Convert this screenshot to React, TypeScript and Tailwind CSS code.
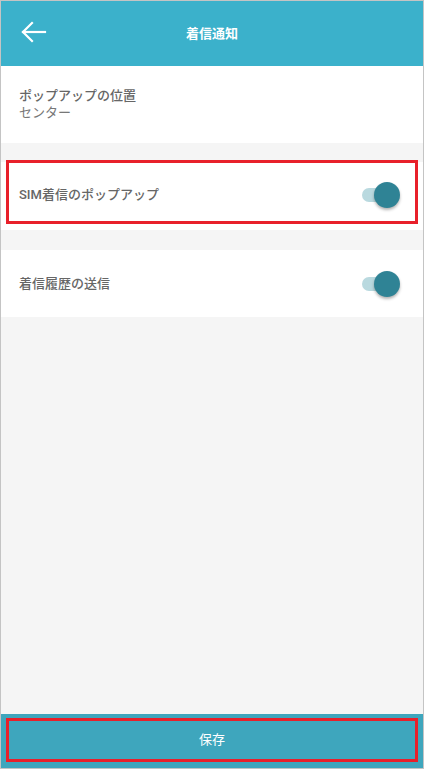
function Toggle() {
  return (
    <div className="relative h-[26px] w-[38px]">
      <div className="absolute left-0 top-[6px] h-[14px] w-[32px] rounded-full bg-[#b9d9df]" />
      <div className="absolute right-0 top-0 h-[26px] w-[26px] rounded-full bg-[#2f8395] shadow-[0_2px_3px_rgba(0,0,0,0.3)]" />
    </div>
  );
}

export default function App() {
  return (
    <div
      className="flex h-[769px] w-[424px] flex-col border border-[#c4c4c4] bg-[#f5f5f5]"
      style={{ fontFamily: 'Roboto, "Noto Sans CJK JP", sans-serif' }}
    >
      {/* header */}
      <header className="relative flex h-[65px] shrink-0 items-center justify-center bg-[#3bb1cb]">
        <button className="absolute left-[19px] top-[19px] text-white">
          <svg width="27" height="24" viewBox="0 0 27 24" fill="none" stroke="white" strokeWidth="2.2" strokeLinecap="square">
            <path d="M3 12H25" />
            <path d="M12 3L3 12L12 21" />
          </svg>
        </button>
        <h1 className="text-[13px] font-bold text-white">着信通知</h1>
      </header>

      {/* popup position */}
      <div className="flex h-[77px] flex-col justify-center bg-white px-[18px] pb-[2px]">
        <p className="text-[13px] font-medium leading-[17px] text-[#666]">ポップアップの位置</p>
        <p className="text-[13px] leading-[17px] text-[#777]">センター</p>
      </div>

      {/* sim popup */}
      <div className="relative mt-[19px] flex h-[68px] items-center justify-between bg-white pl-[18px] pr-[23px] pb-[2px]">
        <span className="text-[13px] font-medium text-[#666]">SIM着信のポップアップ</span>
        <Toggle />
        <div className="pointer-events-none absolute left-[5px] right-[5px] top-[-2px] h-[64px] border-[3px] border-[#e8202a]" />
      </div>

      {/* history */}
      <div className="mt-[20px] flex h-[67px] items-center justify-between bg-white pl-[18px] pr-[23px]">
        <span className="text-[13px] font-medium text-[#666]">着信履歴の送信</span>
        <Toggle />
      </div>

      <div className="flex-1" />

      {/* save */}
      <div className="h-[54px] shrink-0 bg-[#3ea6bd] px-[5px] pt-[4px] pb-[6px]">
        <button className="flex h-full w-full items-center justify-center border-[3px] border-[#e8202a] text-[13px] text-white">
          保存
        </button>
      </div>
    </div>
  );
}
